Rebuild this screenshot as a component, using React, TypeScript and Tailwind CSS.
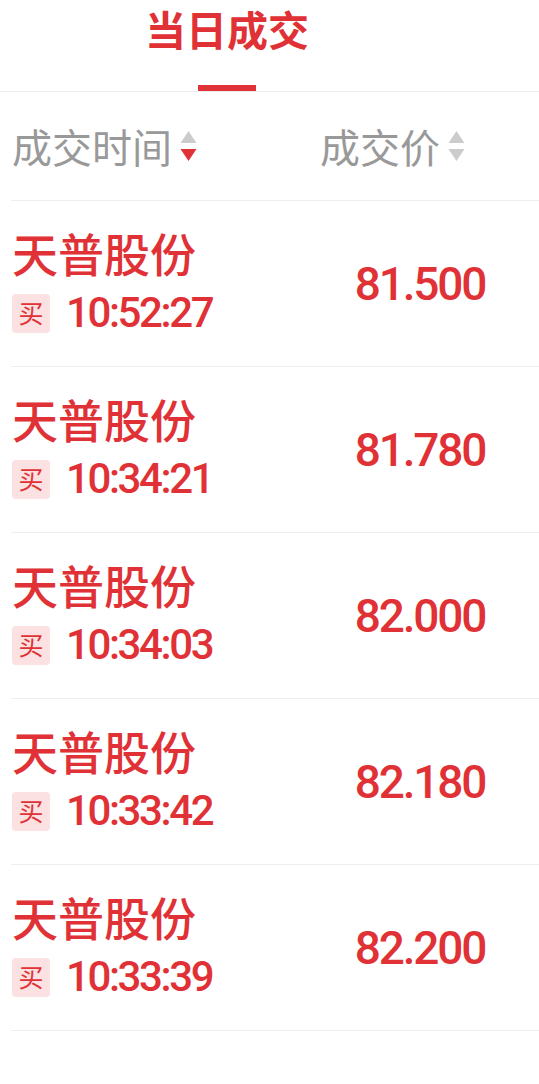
import React from 'react';

interface Trade {
  name: string;
  time: string;
  price: string;
}

const trades: Trade[] = [
  { name: '天普股份', time: '10:52:27', price: '81.500' },
  { name: '天普股份', time: '10:34:21', price: '81.780' },
  { name: '天普股份', time: '10:34:03', price: '82.000' },
  { name: '天普股份', time: '10:33:42', price: '82.180' },
  { name: '天普股份', time: '10:33:39', price: '82.200' },
];

const cjk = { fontFamily: '"Noto Sans CJK SC", "Noto Sans", sans-serif' };
const num = { fontFamily: 'Roboto, "Noto Sans CJK SC", sans-serif' };

const SortIcon: React.FC<{ active?: 'up' | 'down' }> = ({ active }) => (
  <svg width="17" height="31" viewBox="0 0 17 31" className="ml-[8px]">
    <path d="M8.5 0 L16.5 12 L0.5 12 Z" fill={active === 'up' ? '#e03236' : '#cccccc'} />
    <path d="M0.5 18 L16.5 18 L8.5 30 Z" fill={active === 'down' ? '#e03236' : '#cccccc'} />
  </svg>
);

export default function App() {
  return (
    <div className="w-[539px] min-h-[1084px] bg-white" style={cjk}>
      {/* tab bar */}
      <div className="h-[92px] border-b border-[#eeeeee] flex">
        <div className="w-[454px] flex flex-col items-center">
          <div className="pt-[6px] text-[41px] leading-[44px] font-bold text-[#e03236]">当日成交</div>
          <div className="mt-[35px] w-[58px] h-[6px] bg-[#e03236]" />
        </div>
      </div>

      {/* column header */}
      <div className="h-[108px] flex items-center pl-[12px] text-[40px] leading-[40px] text-[#999999]">
        <div className="w-[308px] flex items-center">
          <span>成交时间</span>
          <SortIcon active="down" />
        </div>
        <div className="flex items-center">
          <span>成交价</span>
          <SortIcon />
        </div>
      </div>

      {/* trade list */}
      <div className="ml-[11px] border-b border-[#eeeeee]">
        {trades.map((t, i) => (
          <div key={i} className="h-[166px] border-t border-[#eeeeee] flex items-center">
            <div className="w-[319px] self-start pt-[28px] pl-[1px]">
              <div className="text-[46px] leading-[46px] font-medium text-[#e03236]">{t.name}</div>
              <div className="mt-[17px] flex items-center">
                <span className="w-[38px] h-[39px] rounded-[4px] bg-[#fbe1e1] text-[#e03236] text-[25px] flex items-center justify-center">
                  买
                </span>
                <span
                  className="ml-[16px] text-[42px] leading-[42px] font-medium tracking-[-2.4px] text-[#e03236]"
                  style={num}
                >
                  {t.time}
                </span>
              </div>
            </div>
            <div
              className="w-[180px] text-center text-[46px] leading-[46px] font-medium tracking-[-2.2px] text-[#e03236]"
              style={num}
            >
              {t.price}
            </div>
          </div>
        ))}
      </div>
    </div>
  );
}
